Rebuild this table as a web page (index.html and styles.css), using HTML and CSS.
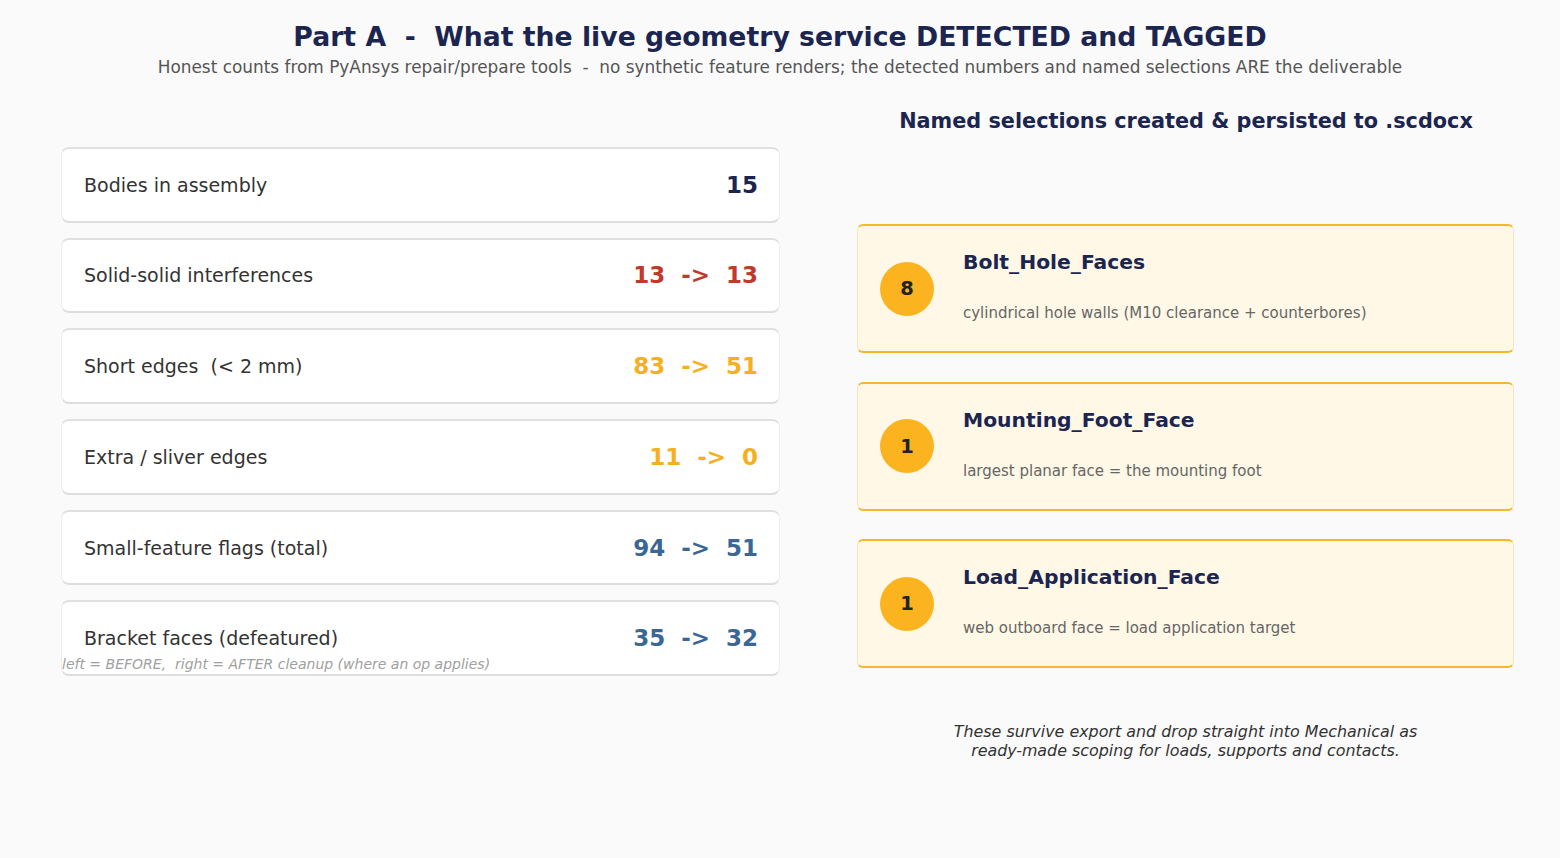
FILE: index.html
```html
<!DOCTYPE html>
<html>
<head>
<meta charset="utf-8">
<link rel="stylesheet" href="styles.css">
</head>
<body>
<header class="head">
  <h1 class="title">Part A&nbsp;&nbsp;-&nbsp;&nbsp;What the live geometry service DETECTED and TAGGED</h1>
  <p class="subtitle">Honest counts from PyAnsys repair/prepare tools&nbsp;&nbsp;-&nbsp;&nbsp;no synthetic feature renders; the detected numbers and named selections ARE the deliverable</p>
</header>
<main class="cols">
  <section class="left">
    <div class="stat"><span class="label">Bodies in assembly</span><span class="val navy">15</span></div>
    <div class="stat"><span class="label">Solid-solid interferences</span><span class="val red">13&nbsp;&nbsp;-&gt;&nbsp;&nbsp;13</span></div>
    <div class="stat"><span class="label">Short edges&nbsp;&nbsp;(&lt; 2 mm)</span><span class="val amber">83&nbsp;&nbsp;-&gt;&nbsp;&nbsp;51</span></div>
    <div class="stat"><span class="label">Extra / sliver edges</span><span class="val amber">11&nbsp;&nbsp;-&gt;&nbsp;&nbsp;0</span></div>
    <div class="stat"><span class="label">Small-feature flags (total)</span><span class="val blue">94&nbsp;&nbsp;-&gt;&nbsp;&nbsp;51</span></div>
    <div class="stat last"><span class="label">Bracket faces (defeatured)</span><span class="val blue">35&nbsp;&nbsp;-&gt;&nbsp;&nbsp;32</span>
      <span class="note">left = BEFORE,&nbsp; right = AFTER cleanup (where an op applies)</span>
    </div>
  </section>
  <section class="right">
    <h2 class="rhead">Named selections created &amp; persisted to .scdocx</h2>
    <div class="sels">
      <div class="sel">
        <div class="badge">8</div>
        <div class="seltext">
          <div class="selname">Bolt_Hole_Faces</div>
          <div class="seldesc">cylindrical hole walls (M10 clearance + counterbores)</div>
        </div>
      </div>
      <div class="sel">
        <div class="badge">1</div>
        <div class="seltext">
          <div class="selname">Mounting_Foot_Face</div>
          <div class="seldesc">largest planar face = the mounting foot</div>
        </div>
      </div>
      <div class="sel">
        <div class="badge">1</div>
        <div class="seltext">
          <div class="selname">Load_Application_Face</div>
          <div class="seldesc">web outboard face = load application target</div>
        </div>
      </div>
    </div>
    <p class="foot">These survive export and drop straight into Mechanical as<br>ready-made scoping for loads, supports and contacts.</p>
  </section>
</main>
</body>
</html>
```

FILE: styles.css
```css
html, body {
  margin: 0;
  padding: 0;
}
body {
  width: 1560px;
  height: 858px;
  background: #fafafa;
  font-family: "DejaVu Sans", "Liberation Sans", sans-serif;
  color: #333;
  overflow: hidden;
}
.head {
  text-align: center;
  padding-top: 20px;
}
.title {
  margin: 0;
  font-size: 26.7px;
  line-height: 34px;
  font-weight: bold;
  color: #1b2550;
}
.subtitle {
  margin: 0;
  margin-top: 2px;
  font-size: 16.9px;
  line-height: 22px;
  color: #555;
}
.cols {
  display: flex;
  padding-left: 61px;
  margin-top: 22px;
}
.left {
  width: 719px;
  display: flex;
  flex-direction: column;
  gap: 15.2px;
  padding-top: 47px;
}
.stat {
  position: relative;
  height: 75.5px;
  box-sizing: border-box;
  background: #fff;
  border: 1px solid #eeeeee;
  border-top: 2px solid #e0e0e0;
  border-bottom: 2px solid #dddddd;
  border-radius: 8px;
  display: flex;
  align-items: center;
  justify-content: space-between;
  padding: 0 21px 0 22px;
}
.label {
  font-size: 19px;
  color: #333;
}
.val {
  font-size: 23px;
  font-weight: bold;
  white-space: pre;
}
.navy { color: #1b2550; }
.red { color: #c0392b; }
.amber { color: #f6b01e; }
.blue { color: #3a6796; }
.note {
  position: absolute;
  left: 0;
  top: 54px;
  font-size: 14px;
  font-style: italic;
  color: #a0a0a0;
}
.right {
  width: 657px;
  margin-left: 77px;
  display: flex;
  flex-direction: column;
}
.rhead {
  margin: 0;
  margin-top: 7px;
  text-align: center;
  font-size: 20.8px;
  line-height: 28px;
  font-weight: bold;
  color: #1b2550;
  padding-left: 1px;
}
.sels {
  display: flex;
  flex-direction: column;
  gap: 28.5px;
  margin-top: 89px;
}
.sel {
  height: 129px;
  box-sizing: border-box;
  background: #fff8e7;
  border: 1px solid #f6e6bd;
  border-top: 2.5px solid #f6b82a;
  border-bottom: 2.5px solid #f6b82a;
  border-radius: 6px;
  display: flex;
  align-items: center;
  padding-left: 22px;
}
.badge {
  width: 54px;
  height: 54px;
  border-radius: 50%;
  background: #fbb41f;
  color: #222;
  font-weight: bold;
  font-size: 19.5px;
  display: flex;
  align-items: center;
  justify-content: center;
  flex: none;
}
.seltext {
  margin-left: 29px;
  display: flex;
  flex-direction: column;
  margin-top: -5px;
}
.selname {
  font-size: 20.3px;
  font-weight: bold;
  color: #1b2550;
  line-height: 24px;
}
.seldesc {
  margin-top: 30px;
  font-size: 15px;
  color: #666;
  line-height: 18px;
}
.foot {
  margin: 54px 0 0;
  text-align: center;
  font-size: 15.9px;
  line-height: 19px;
  font-style: italic;
  color: #333;
}
```
